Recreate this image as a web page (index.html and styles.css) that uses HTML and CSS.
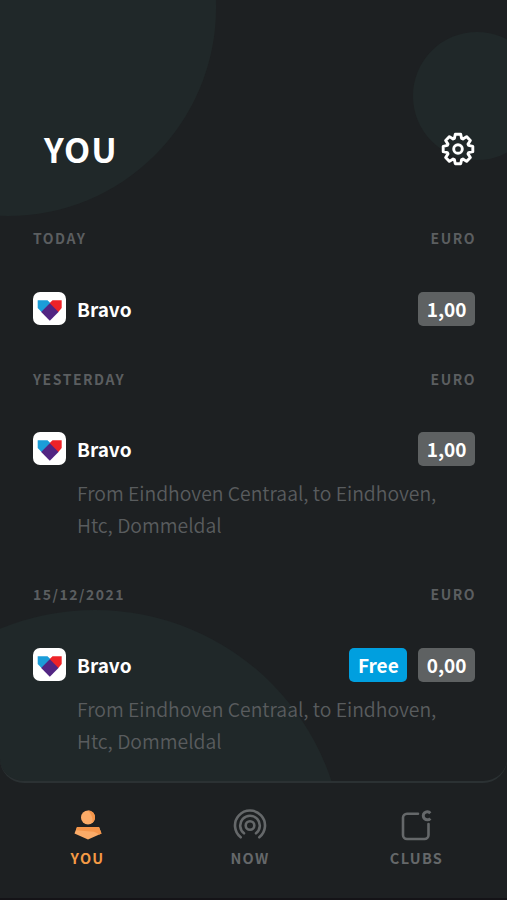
FILE: index.html
```html
<!DOCTYPE html>
<html lang="en">
<head>
    <meta charset="UTF-8">
    <meta name="viewport" content="width=device-width, initial-scale=1.0">
    <title>You</title>
    <link rel="stylesheet" href="styles.css">
</head>
<body>
    <svg class="sprites">
        <symbol id="bravo" viewBox="0 0 33 33">
            <path d="M4.700 8.300h9.800L17 10.800V20H8.500L4.700 16z" fill="#1b9dd9"/>
            <path d="M28.700 8.300h-9.200L17 10.800V20h8.300l3.400-4z" fill="#ee2328"/>
            <path d="M16.800 11.300l8.700 8.600-8.700 8.900-8.600-8.900z" fill="#522583"/>
        </symbol>
    </svg>
    <div class="app">
        <main class="panel">
            <div class="circle circle-left"></div>
            <div class="circle circle-right"></div>
            <div class="circle circle-bottom"></div>
            <header class="header">
                <h1>YOU</h1>
                <svg class="gear" viewBox="-17 -17 34 34">
                    <path d="M-2.7-14.8H2.7L3.6-10.6 4.9-10 8.56-12.37 12.37-8.56 10-4.9 10.6-3.6 14.8-2.7V2.7L10.6 3.6 10 4.9 12.37 8.56 8.56 12.37 4.9 10 3.6 10.6 2.7 14.8H-2.7L-3.6 10.6-4.9 10-8.56 12.37-12.37 8.56-10 4.9-10.6 3.6-14.8 2.7V-2.7L-10.6-3.6-10-4.9-12.37-8.56-8.56-12.37-4.9-10-3.6-10.6z"/>
                    <circle r="4.3"/>
                </svg>
            </header>
            <section class="day">
                <div class="day-title"><span>TODAY</span><span>EURO</span></div>
                <div class="trip">
                    <svg class="logo"><use href="#bravo"/></svg>
                    <span class="name">Bravo</span>
                    <span class="tag">1,00</span>
                </div>
            </section>
            <section class="day">
                <div class="day-title"><span>YESTERDAY</span><span>EURO</span></div>
                <div class="trip">
                    <svg class="logo"><use href="#bravo"/></svg>
                    <span class="name">Bravo</span>
                    <span class="tag">1,00</span>
                </div>
                <p class="route">From Eindhoven Centraal, to Eindhoven, Htc, Dommeldal</p>
            </section>
            <section class="day">
                <div class="day-title"><span>15/12/2021</span><span>EURO</span></div>
                <div class="trip">
                    <svg class="logo"><use href="#bravo"/></svg>
                    <span class="name">Bravo</span>
                    <span class="tag tag-free">Free</span>
                    <span class="tag">0,00</span>
                </div>
                <p class="route">From Eindhoven Centraal, to Eindhoven, Htc, Dommeldal</p>
            </section>
        </main>
        <nav class="tabs">
            <a class="tab active">
                <svg viewBox="0 0 36 36">
                    <circle cx="18" cy="10.500" r="7" fill="#fbab68"/>
                    <path d="M18 3.500a7 7 0 0 1 4.500 12.400q1-7-4.500-12.400z" fill="#f5954a"/>
                    <path d="M7 20h22l2.500 6.500-13.500 6-13.500-6z" fill="#fbab68"/>
                    <path d="M7 20h22l2.500 6.500-2 .9-5.500-2.600-18-1.500z" fill="#f5954a"/>
                </svg>
                <span>YOU</span>
            </a>
            <a class="tab">
                <svg class="line" viewBox="0 0 36 36">
                    <circle cx="18" cy="18.500" r="4.300"/>
                    <path d="M12 26.300a9.800 9.800 0 1 1 12 0"/>
                    <path d="M8.700 30.300a15 15 0 1 1 18.600 0"/>
                </svg>
                <span>NOW</span>
            </a>
            <a class="tab">
                <svg class="line" viewBox="0 0 36 36">
                    <path d="M19 6.700H8a4 4 0 0 0-4 4V28a4 4 0 0 0 4 4h17.500a4 4 0 0 0 4-4V17"/>
                    <path class="thick" d="M31.300 6.200a4 4 0 1 0 0 5.200"/>
                </svg>
                <span>CLUBS</span>
            </a>
        </nav>
    </div>
</body>
</html>
```
FILE: styles.css
```css
* {
    box-sizing: border-box;
}

body {
    margin: 0;
    background-color: #1d2022;
    color: #fff;
    font-family: "Noto Sans CJK SC", "Noto Sans", sans-serif;
}

.sprites {
    display: none;
}

.app {
    height: 900px;
    overflow: hidden;
    border-bottom: 2px solid #141317;
}

.panel {
    position: relative;
    height: 783px;
    padding: 126px 32px 0 33px;
    overflow: hidden;
    border-bottom: 2px solid #2b3133;
    border-radius: 0 0 24px 24px;
}

/* background shapes */
.circle {
    position: absolute;
    z-index: -1;
    border-radius: 50%;
    background-color: #202829;
}

.circle-left {
    left: -200px;
    top: -200px;
    width: 416px;
    height: 416px;
}

.circle-right {
    left: 413px;
    top: 32px;
    width: 128px;
    height: 128px;
}

.circle-bottom {
    left: -154px;
    top: 610px;
    width: 498px;
    height: 498px;
}

.header {
    display: flex;
    justify-content: space-between;
    align-items: center;
    height: 46px;
    padding-left: 11px;
}

h1 {
    margin: 0;
    font-size: 34px;
    font-weight: 700;
    line-height: 46px;
    letter-spacing: 1px;
}

.gear {
    width: 34px;
    height: 34px;
    fill: none;
    stroke: #fff;
    stroke-width: 2.9;
    stroke-linejoin: round;
}

.day {
    padding-top: 56px;
}

.day + .day {
    padding-top: 43px;
}

.day-title {
    display: flex;
    justify-content: space-between;
    height: 20px;
    margin-bottom: 43.5px;
    color: #5b5e60;
    font-size: 14px;
    font-weight: 700;
    line-height: 20px;
    letter-spacing: 1.5px;
}

.day-title span:last-child {
    margin-right: -1px;
}

.trip {
    display: flex;
    height: 34px;
}

.logo {
    width: 33px;
    height: 33px;
    margin-right: 11px;
    border-radius: 7px;
    background-color: #fff;
}

.name {
    margin-right: auto;
    font-size: 19px;
    font-weight: 700;
    line-height: 34px;
}

.tag {
    height: 34px;
    margin-left: 11px;
    padding: 0 8.5px;
    border-radius: 5px;
    background-color: #5e6162;
    font-size: 19px;
    font-weight: 700;
    line-height: 34px;
}

.tag-free {
    background-color: #009fdf;
}

.route {
    margin: 11px 0 0;
    padding: 0 20px 0 44px;
    color: #595c5e;
    font-size: 19.35px;
    font-weight: 350;
    line-height: 32px;
}

.tabs {
    display: grid;
    grid-template-columns: 166px 159px 174px;
    padding: 24px 0 0 4.5px;
}

.tab {
    display: flex;
    flex-direction: column;
    align-items: center;
    color: #65686a;
    font-size: 14.5px;
    font-weight: 700;
    line-height: 20px;
    letter-spacing: 1.3px;
}

.tab svg {
    width: 36px;
    height: 36px;
    margin-bottom: 4.5px;
}

.line {
    fill: none;
    stroke: #65686a;
    stroke-width: 2.6;
    stroke-linecap: round;
}

.line .thick {
    stroke-width: 3;
    stroke-linecap: butt;
}

.active {
    color: #f59a45;
}
```
